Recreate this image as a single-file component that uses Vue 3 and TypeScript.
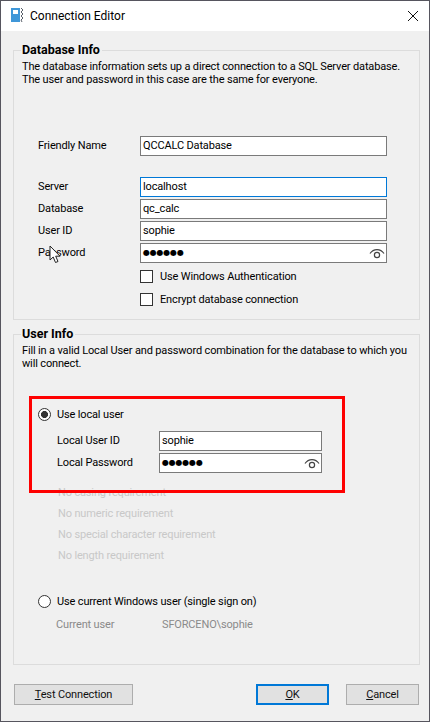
<template>
  <div class="window">
    <header class="titlebar">
      <svg class="app-icon" width="12" height="16" viewBox="0 0 12 16">
        <path d="M0 1h9v14H0z" fill="#3f97d8" />
        <path d="M2 3h5v4H2z" fill="#fff" />
        <path d="M10 1l2 2-2 2 2 2-2 2 2 2-2 2 1 2" fill="none" stroke="#59606a" stroke-width="1" />
      </svg>
      <span class="title">Connection Editor</span>
      <svg class="close" width="10" height="10" viewBox="0 0 10 10">
        <path d="M0 0l10 10M10 0L0 10" stroke="#111" stroke-width="1" fill="none" />
      </svg>
    </header>

    <div class="content">
      <fieldset class="group db-group">
        <legend>Database Info</legend>
        <p class="desc">
          The database information sets up a direct connection to a SQL Server database.<br />
          The user and password in this case are the same for everyone.
        </p>

        <div class="row friendly">
          <label>Friendly Name</label>
          <div class="input">QCCALC Database</div>
        </div>

        <div class="rows">
          <div v-for="f in dbFields" :key="f.label" class="row">
            <label>{{ f.label }}</label>
            <div class="input" :class="{ focused: f.focused }">{{ f.value }}</div>
          </div>
          <div class="row">
            <label>Password</label>
            <div class="input password">
              <span class="dots">●●●●●●</span>
              <svg class="eye" width="16" height="12" viewBox="0 0 16 12">
                <path d="M1 6.5C4.5 1.2 11.5 1.2 15 6.5" fill="none" stroke="#444" stroke-width="1.2" />
                <circle cx="8" cy="8" r="2.6" fill="none" stroke="#444" stroke-width="1.2" />
              </svg>
            </div>
          </div>
        </div>

        <div class="check first"><span class="box"></span>Use Windows Authentication</div>
        <div class="check"><span class="box"></span>Encrypt database connection</div>

        <!-- mouse pointer sitting on the label in the screenshot -->
        <svg class="pointer" width="13" height="19" viewBox="0 0 13 19">
          <path d="M1 1v14l3.2-3 2.3 5.5 2.5-1-2.3-5.3H11z" fill="#fff" stroke="#222" stroke-width="1" />
        </svg>
      </fieldset>

      <fieldset class="group user-group">
        <legend>User Info</legend>
        <p class="desc">
          Fill in a valid Local User and password combination for the database to which you<br />
          will connect.
        </p>

        <div class="radio local"><span class="dot on"></span>Use local user</div>
        <div class="rows local-rows">
          <div class="row">
            <label>Local User ID</label>
            <div class="input">sophie</div>
          </div>
          <div class="row">
            <label>Local Password</label>
            <div class="input password">
              <span class="dots">●●●●●●</span>
              <svg class="eye" width="16" height="12" viewBox="0 0 16 12">
                <path d="M1 6.5C4.5 1.2 11.5 1.2 15 6.5" fill="none" stroke="#444" stroke-width="1.2" />
                <circle cx="8" cy="8" r="2.6" fill="none" stroke="#444" stroke-width="1.2" />
              </svg>
            </div>
          </div>
        </div>

        <ul class="reqs">
          <li v-for="r in requirements" :key="r">{{ r }}</li>
        </ul>

        <div class="radio windows"><span class="dot"></span>Use current Windows user (single sign on)</div>
        <div class="current">
          <span class="current-label">Current user</span>
          <span>SFORCENO\sophie</span>
        </div>

        <div class="highlight"></div>
      </fieldset>

      <footer class="buttons">
        <button class="btn test"><u>T</u>est Connection</button>
        <span class="spacer"></span>
        <button class="btn ok"><u>O</u>K</button>
        <button class="btn cancel"><u>C</u>ancel</button>
      </footer>
    </div>
  </div>
</template>

<script setup lang="ts">
const dbFields = [
  { label: "Server", value: "localhost", focused: true },
  { label: "Database", value: "qc_calc", focused: false },
  { label: "User ID", value: "sophie", focused: false }
];

const requirements = [
  "No casing requirement",
  "No numeric requirement",
  "No special character requirement",
  "No length requirement"
];
</script>

<style>
html, body {
  margin: 0;
  background: #f0f0f0;
}
</style>

<style scoped>
.window {
  width: 430px;
  height: 722px;
  box-sizing: border-box;
  border: 1px solid #56555e;
  background: #f0f0f0;
  color: #000;
  font-family: Roboto, sans-serif;
  font-size: 11px;
  letter-spacing: -0.15px;
  line-height: 13px;
  display: flex;
  flex-direction: column;
  overflow: hidden;
}

.titlebar {
  height: 30px;
  flex: none;
  background: #fff;
  display: flex;
  align-items: center;
  padding: 0 11px 0 10px;
}

.app-icon {
  margin: 0 7px 2px 0;
}

.title {
  font-size: 12px;
  letter-spacing: 0;
  flex: 1;
}

.content {
  flex: 1;
  padding: 11px 9px 0 12px;
  display: flex;
  flex-direction: column;
}

.group {
  margin: 0;
  padding: 0;
  border: 1px solid #dcdcdc;
  position: relative;
  min-width: 0;
}

legend {
  font-weight: 700;
  font-size: 12.5px;
  letter-spacing: 0;
  line-height: 16px;
  margin-left: 7px;
  padding: 0 2px 0 1px;
}

.db-group {
  height: 278px;
  box-sizing: border-box;
}

.user-group {
  height: 339px;
  box-sizing: border-box;
  margin-top: 6px;
}

.desc {
  margin: 2px 0 0 8px;
  line-height: 13.4px;
  white-space: nowrap;
}

.rows {
  display: flex;
  flex-direction: column;
  gap: 2px;
}

.row {
  display: flex;
  align-items: center;
  height: 20px;
  padding-left: 24px;
}

.row label {
  width: 102px;
  flex: none;
}

.friendly {
  margin-top: 49px;
  margin-bottom: 21px;
}

.input {
  box-sizing: border-box;
  width: 247px;
  height: 20px;
  border: 1px solid #7a7a7a;
  background: #fff;
  padding-left: 2px;
  line-height: 17px;
  display: flex;
  align-items: center;
  justify-content: space-between;
}

.focused {
  border-color: #0078d7;
}

.dots {
  font-family: "DejaVu Sans", sans-serif;
  font-size: 8px;
  letter-spacing: -0.2px;
}

.eye {
  margin-right: 1px;
}

.check {
  display: flex;
  align-items: center;
  margin-left: 126px;
  height: 13px;
  margin-top: 10px;
}

.check.first {
  margin-top: 7px;
}

.box {
  box-sizing: border-box;
  width: 13px;
  height: 13px;
  border: 1px solid #333;
  background: #fff;
  margin-right: 7px;
}

.pointer {
  position: absolute;
  left: 35px;
  top: 187px;
}

.radio {
  display: flex;
  align-items: center;
  height: 13px;
  margin-left: 24px;
}

.dot {
  box-sizing: border-box;
  width: 13px;
  height: 13px;
  border: 1px solid #333;
  border-radius: 50%;
  background: #fff;
  margin-right: 6px;
  position: relative;
}

.dot.on {
  background: radial-gradient(circle, #333 0 3.2px, #fff 3.8px);
}

.local {
  margin-top: 37px;
}

.local-rows {
  margin-top: 10px;
}

.local-rows .row {
  padding-left: 43px;
}

.local-rows .input {
  width: 163px;
}

.reqs {
  list-style: none;
  margin: 9px 0 0 44px;
  padding: 0;
  color: #c8c8c8;
}

.reqs li {
  height: 21px;
  line-height: 21px;
}

.windows {
  margin-top: 29px;
}

.current {
  display: flex;
  margin: 10px 0 0 42px;
  color: #8a8a8a;
}

.current-label {
  width: 106px;
}

.highlight {
  position: absolute;
  left: 15px;
  top: 54px;
  width: 316px;
  height: 97px;
  box-sizing: border-box;
  border: 3px solid #fe0000;
}

.buttons {
  display: flex;
  margin-top: 19px;
  padding: 0 1px;
  gap: 17px;
}

.spacer {
  flex: 1;
}

.btn {
  box-sizing: border-box;
  height: 21px;
  width: 73px;
  padding: 0;
  border: 1px solid #adadad;
  background: #e1e1e1;
  color: #111;
  font: inherit;
  letter-spacing: inherit;
}

.btn.test {
  width: 119px;
}

.btn.ok {
  border: 2px solid #0078d7;
}
</style>
